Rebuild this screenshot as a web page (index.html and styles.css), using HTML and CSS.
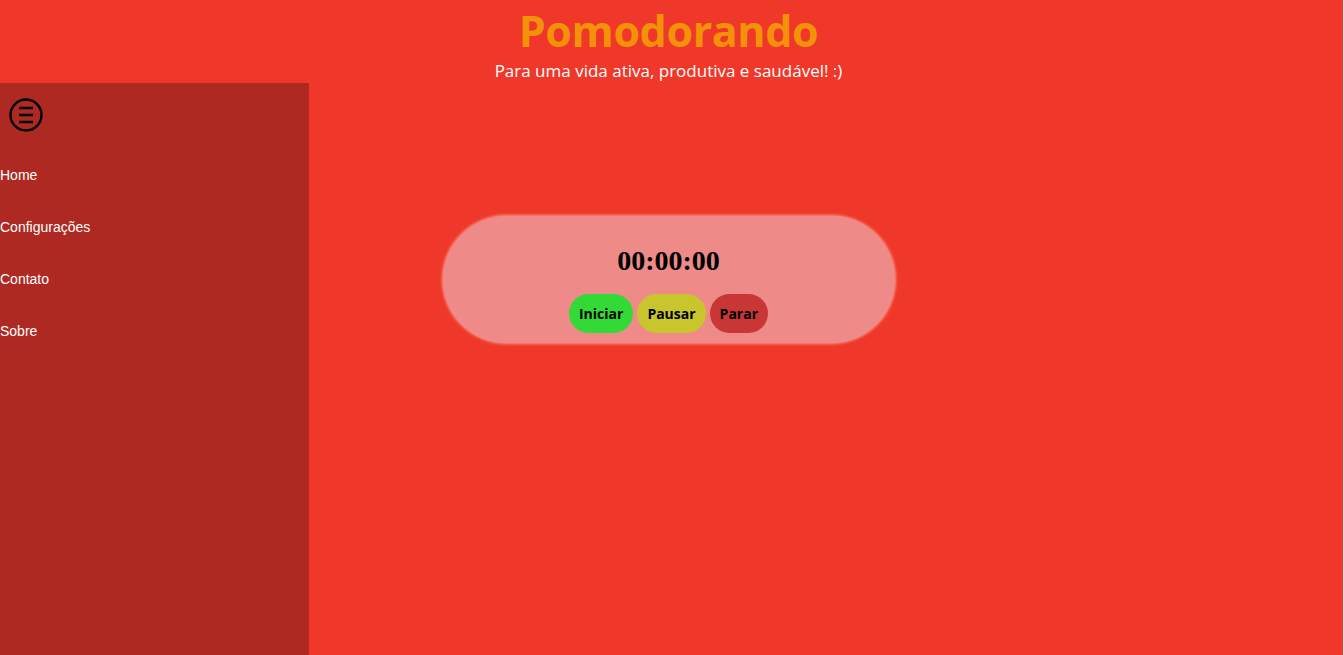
FILE: index.html
```html
<!DOCTYPE html>
<html lang="pt-BR">
<head>
<meta charset="utf-8">
<title>Pomodorando</title>
<link rel="stylesheet" href="styles.css">
</head>
<body>
<div class="page">
  <header class="header">
    <h1 class="title">Pomodorando</h1>
    <p class="subtitle">Para uma vida ativa, produtiva e saudável! :)</p>
  </header>
  <div class="layout">
    <aside class="sidebar">
      <button class="menu-btn" aria-label="Menu">
        <svg width="36" height="36" viewBox="0 0 36 36">
          <circle cx="18" cy="18" r="15.5" fill="none" stroke="#000" stroke-width="2.4"/>
          <path d="M11 11h14M11 18h14M11 25h14" stroke="#000" stroke-width="2.6"/>
        </svg>
      </button>
      <nav class="nav">
        <a href="#">Home</a>
        <a href="#">Configurações</a>
        <a href="#">Contato</a>
        <a href="#">Sobre</a>
      </nav>
    </aside>
    <main class="main">
      <section class="timer">
        <div class="time">00:00:00</div>
        <div class="buttons">
          <button class="btn btn-start">Iniciar</button>
          <button class="btn btn-pause">Pausar</button>
          <button class="btn btn-stop">Parar</button>
        </div>
      </section>
    </main>
  </div>
</div>
</body>
</html>
```
FILE: styles.css
```css
html, body {
  margin: 0;
  padding: 0;
  height: 100%;
  background: #f4e8e4;
}
.page {
  width: 1343px;
  height: 655px;
  background: #ef3829;
  display: flex;
  flex-direction: column;
  overflow: hidden;
}
.header {
  height: 83px;
  text-align: center;
  font-family: "Open Sans", "Noto Sans", sans-serif;
  padding-right: 6px;
  box-sizing: border-box;
}
.title {
  margin: 0;
  padding-top: 8px;
  font-size: 43px;
  font-weight: 700;
  line-height: 46px;
  color: #f39209;
  letter-spacing: -0.4px;
}
.subtitle {
  margin: 5px 0 0;
  font-size: 17px;
  line-height: 24px;
  color: #ffffff;
}
.layout {
  flex: 1;
  display: flex;
  position: relative;
}
.sidebar {
  width: 309px;
  background: #ae2922;
  display: flex;
  flex-direction: column;
}
.menu-btn {
  margin: 14px 0 0 8px;
  padding: 0;
  width: 36px;
  height: 36px;
  border: none;
  background: transparent;
  cursor: pointer;
}
.menu-btn svg { display: block; }
.nav {
  display: flex;
  flex-direction: column;
  gap: 36px;
  margin-top: 34px;
}
.nav a {
  font-family: "Liberation Sans", Arial, sans-serif;
  font-size: 14px;
  line-height: 16px;
  color: #ffffff;
  text-decoration: none;
}
.main {
  position: absolute;
  inset: 0;
  display: flex;
  justify-content: center;
  align-items: flex-start;
  pointer-events: none;
}
.timer {
  pointer-events: auto;
  margin-top: 133px;
  margin-right: 6px;
  width: 452px;
  height: 127px;
  box-sizing: border-box;
  border-radius: 64px;
  background: #ee8a88;
  box-shadow: 0 0 3px 1px rgba(255, 190, 180, 0.7);
  display: flex;
  flex-direction: column;
  align-items: center;
  padding-top: 28px;
}
.time {
  font-family: "Liberation Serif", "Times New Roman", serif;
  font-weight: 700;
  font-size: 28px;
  line-height: 34px;
  color: #000;
}
.buttons {
  display: flex;
  gap: 4px;
  margin-top: 16px;
}
.btn {
  height: 39px;
  border: none;
  border-radius: 20px;
  padding: 0 10px;
  font-family: "Open Sans", "Noto Sans", sans-serif;
  font-weight: 700;
  font-size: 14px;
  color: #000;
  cursor: pointer;
}
.btn-start { background: #33d936; }
.btn-pause { background: #c8c62c; }
.btn-stop { background: #c83636; }
```
